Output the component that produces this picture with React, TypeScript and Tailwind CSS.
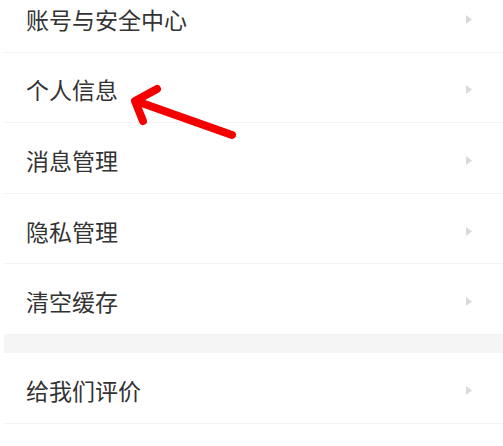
import React from 'react';

const items = ['账号与安全中心', '个人信息', '消息管理', '隐私管理', '清空缓存'];

function Row({ label }: { label: string }) {
  return (
    <div className="flex h-[70.6px] items-center justify-between border-b border-[#f3f3f3] pl-[22px] pr-[31px] pt-[5px]">
      <span className="text-[23px] leading-none text-[#333333]">{label}</span>
      <svg width="6" height="9" viewBox="0 0 6 9">
        <path d="M0 0 L6 4.5 L0 9 Z" fill="#dadada" />
      </svg>
    </div>
  );
}

export default function App() {
  return (
    <div
      className="relative h-[446px] w-[503px] overflow-hidden bg-white pl-[4px]"
      style={{ fontFamily: '"Noto Sans CJK SC", "Noto Sans", sans-serif' }}
    >
      <div className="-mt-[18px]">
        {items.map(label => (
          <Row key={label} label={label} />
        ))}
        <div className="h-[18px] bg-[#f5f5f5]" />
        <Row label="给我们评价" />
      </div>

      {/* red annotation arrow */}
      <svg className="absolute left-0 top-0" width="503" height="446" viewBox="0 0 503 446">
        <g stroke="#f50000" strokeWidth="8" strokeLinecap="round" strokeLinejoin="round" fill="none">
          <path d="M232 135 L136 101" />
          <path d="M157 89 L135 101 L143 121" />
        </g>
      </svg>
    </div>
  );
}
